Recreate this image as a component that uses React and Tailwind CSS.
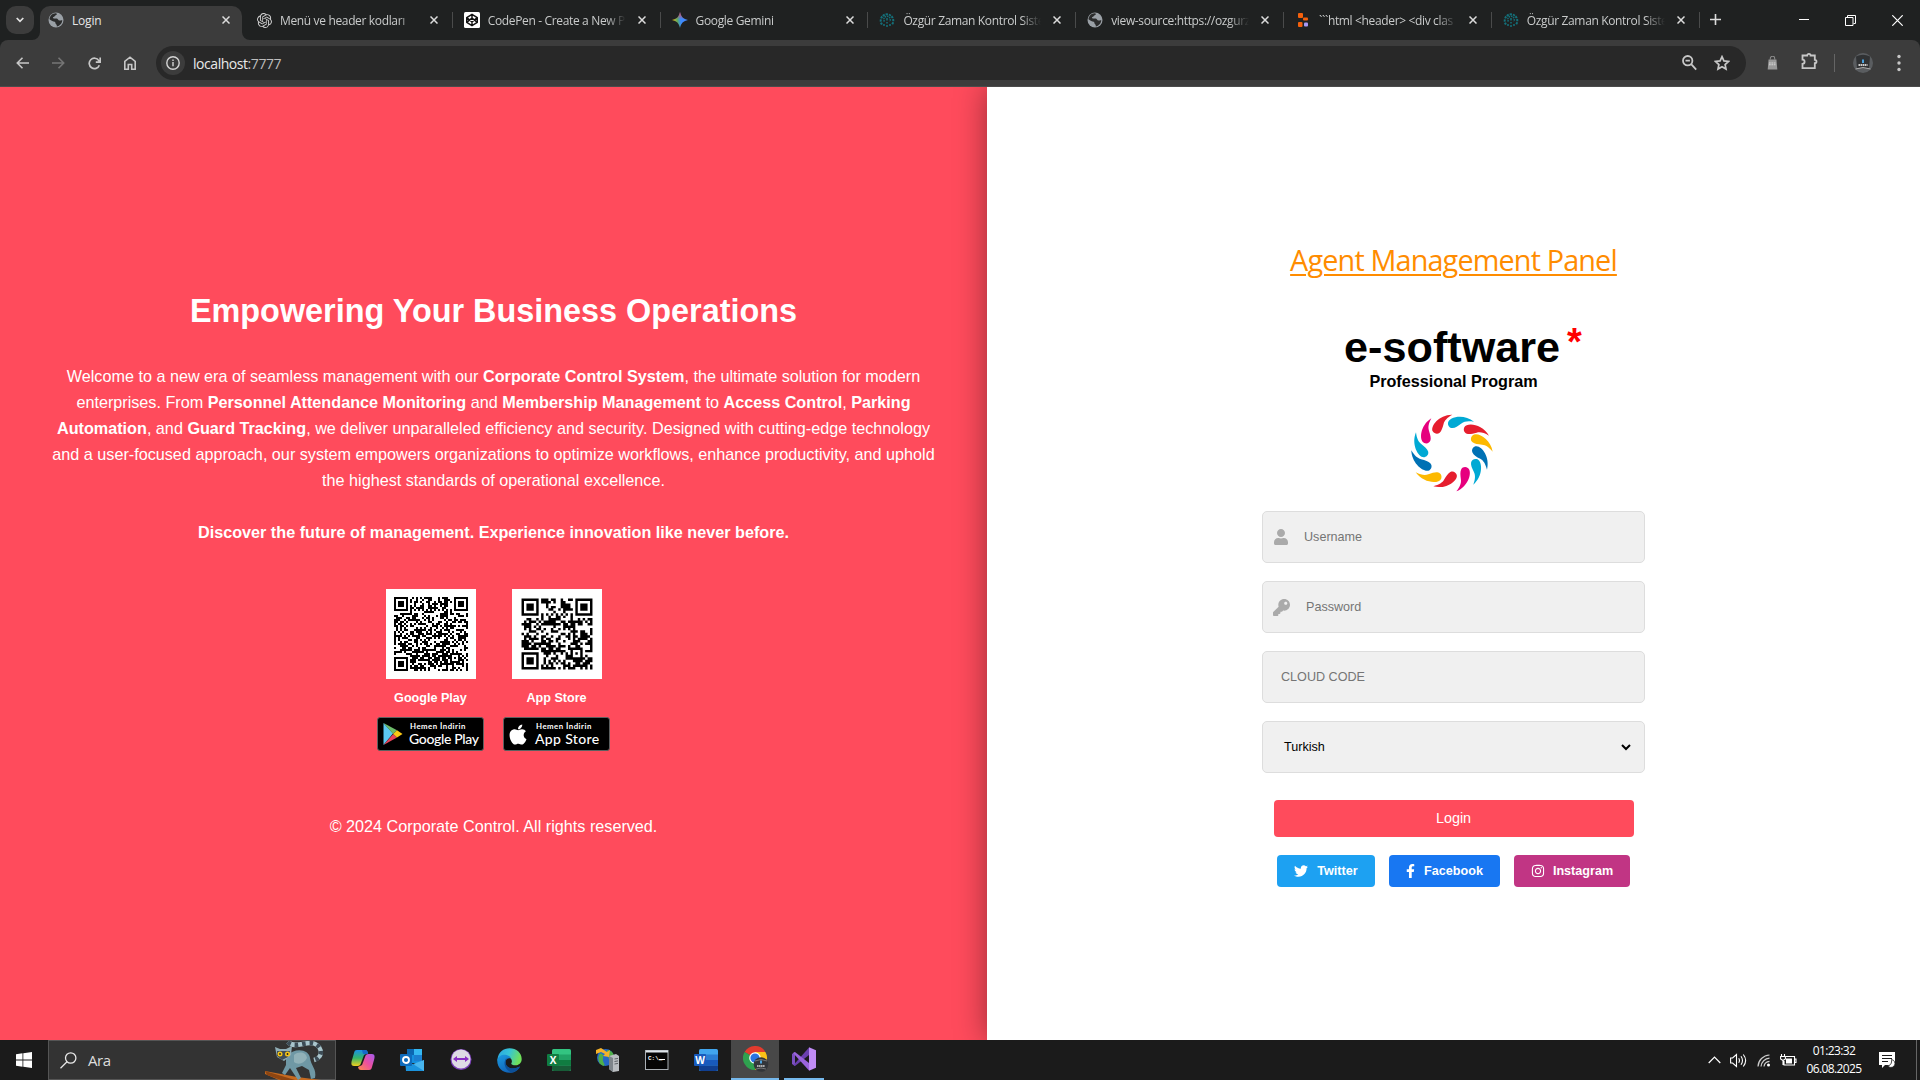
import React from "react";
import { FaUser, FaKey, FaTwitter, FaFacebookF, FaInstagram, FaApple } from "react-icons/fa";
import { SiOpenai } from "react-icons/si";

const Globe = () => (
  <svg className="size-4" viewBox="0 0 16 16">
    <circle cx="8" cy="8" r="7.5" fill="#9aa0a6" />
    <path d="M8 1.200c1.500.3 1 1.600-.3 2-1.200.4-1 1.600-2.200 1.900-1 .3-.6 1.500.5 1.500h2.500c1.500 0 1.500 2 3 2 .8 0 1.500-.3 2.800-.3-.2 3-2.500 5.700-5.500 6.300.2-1.500-.2-2-.9-2.600-.7-.6-.2-1.900-1.200-2.200-1.600-.4-3.200-1.300-5.200-2.600C1.700 3.900 4.500 1 8 1.200z" fill="#2b2c2c" />
  </svg>
);

const OpenAI = () => <SiOpenai className="size-[15px] text-[#d0d0d0]" />;

const CodePen = () => (
  <svg className="size-4" viewBox="0 0 16 16">
    <rect width="16" height="16" rx="1.500" fill="#fff" />
    <path d="M8 2.300l5.300 3.300v4.800L8 13.700 2.700 10.400V5.600zM8 2.300v3.800M8 13.700V9.900M2.700 5.600L8 9.900l5.300-4.300M2.700 10.400L8 6.100l5.300 4.300" fill="none" stroke="#111" strokeWidth="1.400" strokeLinejoin="round" />
  </svg>
);

const Gemini = () => (
  <svg className="size-4" viewBox="0 0 16 16">
    <defs>
      <linearGradient id="gem" x1="0" y1="0.600" x2="1" y2="0.500">
        <stop offset="0" stopColor="#fbbc04" />
        <stop offset=".35" stopColor="#59a96a" />
        <stop offset=".55" stopColor="#3b8bff" />
        <stop offset="1" stopColor="#4a86f7" />
      </linearGradient>
      <linearGradient id="gem2" x1="0" y1="0" x2="0" y2="1">
        <stop offset="0" stopColor="#f44336" />
        <stop offset=".45" stopColor="#f44336" stopOpacity="0" />
      </linearGradient>
    </defs>
    <path d="M8 0c.8 4.500 3.500 7.200 8 8-4.500.8-7.200 3.500-8 8-.8-4.500-3.500-7.200-8-8 4.500-.8 7.200-3.500 8-8z" fill="url(#gem)" />
    <path d="M8 0c.8 4.500 3.500 7.200 8 8-4.500.8-7.200 3.500-8 8-.8-4.500-3.500-7.200-8-8 4.500-.8 7.200-3.500 8-8z" fill="url(#gem2)" />
  </svg>
);

const Ozgur = () => (
  <svg className="size-4" viewBox="0 0 16 16" fill="none" stroke="#14707a">
    <path d="M3 12.500A6.300 6.300 0 1 1 13 12.500" strokeWidth="2" strokeDasharray="2.200 .9" />
    <path d="M5.500 9.500a3.200 3.200 0 1 1 5 0" strokeWidth="1.500" strokeDasharray="1.500 .8" />
    <path d="M8 6v2.500M8 10v1.500M8 13v2M5 12v2M11 12v2" strokeWidth="1.500" />
  </svg>
);

const Blocks = () => (
  <svg className="size-4" viewBox="0 0 16 16">
    <rect x="3" y="1" width="5" height="5" rx="1" fill="#f4600c" />
    <rect x="8" y="5.500" width="5" height="3" rx="1" fill="#f4600c" />
    <rect x="3" y="10" width="4.500" height="5" rx="1" fill="#f4600c" />
    <rect x="9" y="10.500" width="4" height="4" rx="1" fill="#a99af5" />
  </svg>
);

const tabs = [
  { icon: <OpenAI />, title: "Menü ve header kodları" },
  { icon: <CodePen />, title: "CodePen - Create a New P" },
  { icon: <Gemini />, title: "Google Gemini" },
  { icon: <Ozgur />, title: "Özgür Zaman Kontrol Siste" },
  { icon: <Globe />, title: "view-source:https://ozgurz" },
  { icon: <Blocks />, title: "```html <header> <div clas" },
  { icon: <Ozgur />, title: "Özgür Zaman Kontrol Siste" },
];

const X = () => (
  <svg className="size-2 shrink-0" viewBox="0 0 8 8" stroke="#dcdcdc" strokeWidth="1.500">
    <path d="M.5.5l7 7M7.500.5l-7 7" />
  </svg>
);

function Tab({ icon, title }) {
  return (
    <div className="flex h-7 w-[207.800px] shrink-0 items-center pl-[14px]">
      <div className="flex w-4 justify-center">{icon}</div>
      <div className="mt-px ml-2 w-[143px] whitespace-nowrap text-[12px] tracking-[-0.350px] text-[#c9cbcb] [mask-image:linear-gradient(to_right,black_118px,transparent_138px)]">{title}</div>
      <div className="ml-[7px]"><X /></div>
      <div className="mr-[-3px] ml-auto h-4 w-px bg-[#4a4b4b]" />
    </div>
  );
}

function TabStrip() {
  return (
    <div className="flex h-10 items-end bg-[#1f2121]">
      <div className="mb-1.5 ml-1.5 flex h-7 w-7 items-center justify-center rounded-[10px] bg-[#3c3c3c]">
        <svg width="8" height="6" viewBox="0 0 8 6" fill="none" stroke="#e3e3e3" strokeWidth="1.700"><path d="M.7 1L4 4.300 7.300 1" /></svg>
      </div>
      <svg className="ml-[-2px]" width="8" height="8" viewBox="0 0 8 8"><path d="M8 0v8H0a8 8 0 0 0 8-8z" fill="#3c3c3c" /></svg>
      <div className="flex h-[34px] w-[202px] items-center rounded-t-[10px] bg-[#3c3c3c] pb-1.5 pl-2">
        <Globe />
        <div className="mt-px ml-2 w-[150px] text-[12px] tracking-[-0.200px] text-[#e6e6e6]">Login</div>
        <X />
      </div>
      <svg width="8" height="8" viewBox="0 0 8 8"><path d="M0 0v8h8a8 8 0 0 1-8-8z" fill="#3c3c3c" /></svg>
      <div className="mb-1.5 ml-[-8px] flex">
        {tabs.map((t, i) => <Tab key={i} {...t} />)}
      </div>
      <svg className="mb-[15px] ml-[13px]" width="11" height="11" viewBox="0 0 11 11" stroke="#dcdcdc" strokeWidth="1.600"><path d="M5.500 0v11M0 5.500h11" /></svg>
      <div className="mb-[14px] ml-auto mr-[17px] flex items-center gap-[36px]">
        <svg width="10" height="12" viewBox="0 0 10 12" stroke="#fff"><path d="M0 5.500h10" /></svg>
        <svg width="11" height="11" viewBox="0 0 11 11" fill="none" stroke="#fff"><path d="M.5 2.500h7.500v8h-7.500zM2.500 2.500v-2h8v8h-2" /></svg>
        <svg width="11" height="11" viewBox="0 0 11 11" stroke="#fff" strokeWidth="1.200"><path d="M.3.3l10.400 10.400M10.700.3L.3 10.700" /></svg>
      </div>
    </div>
  );
}

function Toolbar() {
  return (
    <div className="flex h-[47px] items-center rounded-t-[8px] border-b border-[#4b4b4b] bg-[#3c3c3c] pl-4 text-[#c7c7c7]">
      <div className="flex w-[140px] items-center gap-[23px]">
        <svg width="13" height="12" viewBox="0 0 13 12" fill="none" stroke="#c7c7c7" strokeWidth="1.600"><path d="M13 6H1.500M6.500.8L1.300 6l5.200 5.200" /></svg>
        <svg width="13" height="12" viewBox="0 0 13 12" fill="none" stroke="#757575" strokeWidth="1.600"><path d="M0 6h11.500M6.500.8L11.700 6l-5.200 5.200" /></svg>
        <svg width="13" height="13" viewBox="0 0 13 13" fill="none" stroke="#c7c7c7" strokeWidth="1.700"><path d="M11.300 8.200A5.200 5.200 0 1 1 10.800 3.600L12 5M12.200.5v4.600H7.800" /></svg>
        <svg width="12" height="14" viewBox="0 0 12 14" fill="none" stroke="#c7c7c7" strokeWidth="1.600"><path d="M.8 13.200V5.300L6 1.200l5.200 4.100v7.900H7.700V8.500H4.300v4.700z" /></svg>
      </div>
      <div className="flex h-[34px] w-[1590px] items-center rounded-full bg-[#282828] pl-[5px]">
        <div className="flex size-6 items-center justify-center rounded-full bg-[#3c3c3c]">
          <svg width="14" height="14" viewBox="0 0 14 14" fill="none" stroke="#d5d5d5" strokeWidth="1.400"><circle cx="7" cy="7" r="6.200" /><path d="M7 6v4.200M7 3.600v1.500" /></svg>
        </div>
        <div className="ml-2 text-[14px] tracking-[-0.450px] text-[#e8e8e8]">localhost<span className="text-[#bdbdbd]">:7777</span></div>
        <svg className="ml-auto" width="15" height="16" viewBox="0 0 15 16" fill="none" stroke="#c7c7c7" strokeWidth="1.800"><circle cx="5.700" cy="5.700" r="4.700" /><path d="M9.200 9.200l5 5.500M3.500 5.700h4.400" /></svg>
        <svg className="mr-4 ml-[17px]" width="16" height="16" viewBox="0 0 16 16" fill="none" stroke="#c7c7c7" strokeWidth="1.700"><path d="M8 1.700l1.900 4.200 4.600.5-3.400 3.100.9 4.500-4-2.300L4 14l.9-4.500L1.500 6.400l4.600-.5z" /></svg>
      </div>
      <svg className="ml-[21px]" width="11" height="14" viewBox="0 0 11 16"><path d="M3 4V2.500a2.500 2.200 0 0 1 5 0V4" fill="none" stroke="#8c8c8c" strokeWidth="1.200" /><path d="M1 4h9l1 11.500H0z" fill="#999" /><path d="M1.500 8h8M1.500 10h8" stroke="#d6d6d6" strokeWidth="1.200" strokeDasharray="2 .7" /></svg>
      <svg className="mb-1 ml-[23px]" width="17" height="18" viewBox="0 0 17 18" fill="none" stroke="#c7c7c7" strokeWidth="1.800"><path d="M1.500 3.500h4.700a1.700 1.700 0 0 1 3.400 0h4.200v4.300a1.700 1.700 0 0 1 0 3.400v4.900H1.500v-4.300c2.800-.2 2.800-4 0-4.200z" /></svg>
      <div className="ml-4 h-[18px] w-px bg-[#656565]" />
      <svg className="ml-[18px]" width="20" height="20" viewBox="0 0 20 20">
        <circle cx="10" cy="10" r="10" fill="#5a5d60" />
        <path d="M3 3.500Q10 0 17 3.500L16 15H4z" fill="#303234" />
        <path d="M2.500 16Q10 13 17.500 16" stroke="#aaa" fill="none" />
        <rect x="9" y="6.500" width="2" height="3.500" fill="#4aa3e0" />
        <path d="M5.500 12h9" stroke="#ccc" strokeWidth="2" strokeDasharray="1.500 .5" />
      </svg>
      <svg className="ml-6" width="4" height="18" viewBox="0 0 4 18" fill="#c7c7c7"><circle cx="2" cy="2.500" r="1.700" /><circle cx="2" cy="9" r="1.700" /><circle cx="2" cy="15.500" r="1.700" /></svg>
    </div>
  );
}

/* Square matrix code with finder patterns and deterministic data modules. */
function qrPath(n, seed) {
  let s = seed;
  const rnd = () => {
    s = (s * 1664525 + 1013904223) >>> 0;
    return s / 4294967296;
  };
  let d = "";
  const finder = (x, y) => {
    const m = Math.max(Math.abs(x - 3), Math.abs(y - 3));
    return m === 3 || m <= 1;
  };
  for (let y = 0; y < n; y++) {
    for (let x = 0; x < n; x++) {
      const r = rnd() < 0.54;
      let on = r;
      if (x < 8 && y < 8) on = x < 7 && y < 7 && finder(x, y);
      else if (x >= n - 8 && y < 8) on = x >= n - 7 && y < 7 && finder(x - n + 7, y);
      else if (x < 8 && y >= n - 8) on = x < 7 && y >= n - 7 && finder(x, y - n + 7);
      else if (Math.abs(x - n + 7) <= 2 && Math.abs(y - n + 7) <= 2) {
        on = Math.max(Math.abs(x - n + 7), Math.abs(y - n + 7)) !== 1;
      } else if (x === 6 || y === 6) on = (x + y) % 2 === 0;
      if (on) d += `M${x} ${y}h1v1h-1z`;
    }
  }
  return d;
}

function Store({ n, seed, pad, label, children }) {
  return (
    <div className="flex w-[126px] flex-col items-center">
      <svg className="size-[90px] bg-white" viewBox={`${-pad} ${-pad} ${n + 2 * pad} ${n + 2 * pad}`} shapeRendering={n === 37 ? "crispEdges" : "auto"}>
        <path d={qrPath(n, seed)} fill="#000" />
      </svg>
      <div className="mt-[10px] h-[18px] text-[12.600px] leading-[18px] font-bold">{label}</div>
      <div className="mt-2.5 flex h-[34px] w-[107px] items-center rounded-[3px] border border-[#5d6060] bg-black pl-[5px]">{children}</div>
    </div>
  );
}

function LeftPanel() {
  return (
    <div className="flex w-[987px] flex-col items-center bg-[#ff4b5c] pt-[202px] text-[16.200px] leading-[25.920px] text-white">
      <h1 className="text-[32.400px] leading-[44px] font-bold">Empowering Your Business Operations</h1>
      <p className="mt-[31px] w-[900px] text-center">
        Welcome to a new era of seamless management with our <b>Corporate Control System</b>, the ultimate solution for modern<br />
        enterprises. From <b>Personnel Attendance Monitoring</b> and <b>Membership Management</b> to <b>Access Control</b>, <b>Parking</b><br />
        <b>Automation</b>, and <b>Guard Tracking</b>, we deliver unparalleled efficiency and security. Designed with cutting-edge technology<br />
        and a user-focused approach, our system empowers organizations to optimize workflows, enhance productivity, and uphold<br />
        the highest standards of operational excellence.<br /><br />
        <b>Discover the future of management. Experience innovation like never before.</b>
      </p>
      <div className="mt-11 flex">
        <Store n={37} seed={77} pad={4} label="Google Play">
          <svg width="20" height="22" viewBox="0 0 20 22">
            <path d="M.5 0L10 10.500.5 22z" fill="#5bc8f2" />
            <path d="M.5 0L14 7.200 10.200 11z" fill="#6dbb6a" />
            <path d="M.5 22L14 14.500 10.200 11z" fill="#e9435a" />
            <path d="M14 7.200l5.500 3.700L14 14.500 10.200 11z" fill="#fbc814" />
          </svg>
          <div className="ml-[6px] flex flex-col font-[Lato,sans-serif] whitespace-nowrap">
            <span className="ml-px h-[9px] text-[7.800px] leading-[9px] font-bold tracking-[0.500px]">Hemen İndirin</span>
            <span className="h-4 text-[14px] leading-[15px] font-medium tracking-[-0.350px]">Google Play</span>
          </div>
        </Store>
        <Store n={29} seed={4242} pad={3.900} label="App Store">
          <FaApple className="ml-[-1px] h-[23px] w-[20px]" />
          <div className="ml-[7px] flex flex-col font-[Lato,sans-serif] whitespace-nowrap">
            <span className="ml-px h-[9px] text-[7.800px] leading-[9px] font-bold tracking-[0.500px]">Hemen İndirin</span>
            <span className="h-4 text-[14px] leading-[15px] font-medium tracking-[0.350px]">App Store</span>
          </div>
        </Store>
      </div>
      <div className="mt-[63px]">© 2024 Corporate Control. All rights reserved.</div>
    </div>
  );
}

const drops = [
  [640, 612, 705, 608, "#00a9d4"],
  [688, 630, 750, 650, "#e61e2e"],
  [710, 658, 761, 698, "#fdb900"],
  [714, 694, 744, 752, "#0071b4"],
  [711, 733, 703, 797, "#00a9d4"],
  [680, 758, 652, 817, "#e6007e"],
  [641, 772, 583, 802, "#e61e2e"],
  [594, 775, 530, 760, "#fdb900"],
  [563, 743, 517, 694, "#0071b4"],
  [553, 702, 531, 640, "#00a9d4"],
  [560, 660, 577, 598, "#e6007e"],
  [592, 630, 640, 587, "#e61e2e"],
];

const RingLogo = () => (
  <svg width="84" height="80" viewBox="513 582 252 240">
    {drops.map(([hx, hy, tx, ty, c]) => (
      <path
        key={hx + "-" + hy}
        transform={`translate(${hx} ${hy}) rotate(${(Math.atan2(ty - hy, tx - hx) * 180) / Math.PI}) scale(${Math.hypot(tx - hx, ty - hy) / 65} 1)`}
        d="M0 15C-9 15-14 7-13-1C-10-19 36-27 65 0C47-4 36-3 27 3C16 10 8 15 0 15z"
        fill={c}
      />
    ))}
  </svg>
);

const Field = ({ icon, pad, children, dark }) => (
  <div className={"mb-[18px] flex h-[52px] w-[383px] items-center rounded-[5px] border border-[#ddd] bg-[#f0f0f0] text-[12.600px] " + pad + (dark ? " text-black" : " text-[#757575]")}>
    {icon}
    {children}
  </div>
);

function RightPanel() {
  return (
    <div className="flex flex-1 flex-col items-center bg-white pt-[151px] shadow-[0_0_30px_rgba(0,0,0,0.400)] [clip-path:inset(0_0_0_-40px)]">
      <a className="font-['Open_Sans',sans-serif] text-[28.800px] leading-[44px] font-normal tracking-[-0.850px] whitespace-nowrap text-[#ff8c00] underline decoration-2 underline-offset-[3px]">Agent Management Panel</a>
      <div className="mt-10 flex h-[50px] text-[43.200px] leading-[50px] font-bold text-black">
        <span className="ml-[19px]">e-software</span>
        <span className="-mt-[5px] ml-[7px] text-[38px] text-[#f00]">*</span>
      </div>
      <div className="text-[16.200px] leading-[18px] font-bold text-black">Professional Program</div>
      <div className="mt-[23px] mr-[3px] mb-[18px] h-[80px]"><RingLogo /></div>
      <Field pad="pl-[10px]" icon={<FaUser className="mr-[15px] size-4 text-[#aaa]" />}>Username</Field>
      <Field pad="pl-[10px]" icon={<FaKey className="mr-4 size-[17px] text-[#aaa]" />}>Password</Field>
      <Field pad="pl-[18px]">CLOUD CODE</Field>
      <Field pad="pl-[21px] pr-[13px]" dark>
        <span>Turkish</span>
        <svg className="ml-auto" width="10" height="7" viewBox="0 0 10 7" fill="none" stroke="#000" strokeWidth="2"><path d="M1 1l4 4 4-4" /></svg>
      </Field>
      <div className="mt-[9px] flex h-[37px] w-[360px] items-center justify-center rounded-[4px] bg-[#ff4b5c] text-[14.400px] text-white">Login</div>
      <div className="mt-[18px] flex h-8 gap-[14px] text-[12.600px] font-bold text-white">
        <div className="flex w-[98px] items-center justify-center gap-[9px] rounded-[4px] bg-[#1da1f2]"><FaTwitter className="size-[14px]" />Twitter</div>
        <div className="flex w-[111px] items-center justify-center gap-[9px] rounded-[4px] bg-[#1877f2]"><FaFacebookF className="h-[14px] w-[9px]" />Facebook</div>
        <div className="flex w-[116px] items-center justify-center gap-2 rounded-[4px] bg-[#c13584]"><FaInstagram className="size-[14px]" />Instagram</div>
      </div>
    </div>
  );
}

const Lemur = () => (
  <svg width="60" height="39" viewBox="0 0 60 39">
    <path d="M23 1C28 7 38 2 45 2C57 2 60 16 49 19" fill="none" stroke="#a9c5cc" strokeWidth="4.500" />
    <path d="M23 1C28 7 38 2 45 2C57 2 60 16 49 19" fill="none" stroke="#3c4b55" strokeWidth="4.500" strokeDasharray="3.500 4" />
    <path d="M0 30L32 36 56 39H14L0 33z" fill="#c56a20" />
    <path d="M0 30l2 4 14 5h14z" fill="#8d4511" />
    <path d="M21 15C30 6 44 8 45 17C46 25 52 28 50 37L46 38L44 29L37 25L31 27L36 37L33 39L25 27L20 34L17 32L21 24z" fill="#6f98a5" />
    <path d="M29 14c5-4 12-3 13 3-3 6-9 7-13 4z" fill="#91b1b8" />
    <path d="M10 6l5 2h6l6-3-1 9-7 6-7-4z" fill="#90aeb7" />
    <path d="M12 10h13l-2 6-6 3-5-4z" fill="#3e4c55" />
    <circle cx="15" cy="13" r="2.500" fill="#f4c414" /><circle cx="22.500" cy="13" r="2.500" fill="#f4c414" />
    <circle cx="15" cy="13" r=".9" fill="#222" /><circle cx="22.500" cy="13" r=".9" fill="#222" />
  </svg>
);

const Copilot = () => (
  <svg width="24" height="22" viewBox="0 0 24 22">
    <defs>
      <linearGradient id="cpa" x1="0" y1="0" x2="0" y2="1"><stop stopColor="#1a8fe8" /><stop offset=".5" stopColor="#35b56a" /><stop offset="1" stopColor="#f2cf1d" /></linearGradient>
      <linearGradient id="cpb" x1="1" y1="0" x2="0" y2="1"><stop stopColor="#a45cf0" /><stop offset=".5" stopColor="#ec4fa0" /><stop offset="1" stopColor="#ff8a4a" /></linearGradient>
    </defs>
    <path d="M6 1h8c2 0 2.500 1 3 3l-4 2-3 8c-.5 2-1.500 3-3.500 3H3c-3 0-3-3-2-6l2-7C3.500 2 4 1 6 1z" fill="url(#cpa)" />
    <path d="M11 1h3c2 0 2.500 1 3 4h-5z" fill="#1668c8" />
    <path d="M18 21h-8c-2 0-2.500-1-3-3l4-2 3-8c.5-2 1.500-3 3.500-3H21c3 0 3 3 2 6l-2 7c-.5 2-1 3-3 3z" fill="url(#cpb)" />
  </svg>
);

const Office = ({ letter, dark, a, b, c, d }) => (
  <svg width="24" height="22" viewBox="0 0 24 22">
    <rect x="5" y="0" width="19" height="22" rx="1.500" fill={a} />
    <path d="M5 5.500h19v5.500H5z" fill={b} />
    <path d="M5 11h19v5.500H5z" fill={c} />
    <path d="M5 16.500h19V20q0 2-2 2H7q-2 0-2-2z" fill={d} />
    <rect x="0" y="5" width="12" height="12" rx="1" fill={dark} />
    <text x="6" y="14.500" textAnchor="middle" fontSize="10" fontWeight="700" fill="#fff" fontFamily="Open Sans, sans-serif">{letter}</text>
  </svg>
);

const Outlook = () => (
  <svg width="24" height="22" viewBox="0 0 24 22">
    <rect x="7" y="0" width="15" height="14" fill="#1490df" />
    <path d="M7 0h7v6H7z" fill="#0b67b2" /><path d="M14 0h8v6h-8z" fill="#35b8f1" /><path d="M14 6h8v6h-8z" fill="#1b7fd0" />
    <path d="M5 11l10 5 9-5v11H6z" fill="#1b93dd" /><path d="M24 11v11L13 15z" fill="#48b5ee" />
    <rect y="5" width="12" height="12" rx="1" fill="#0f6cbd" />
    <circle cx="6" cy="11" r="3" fill="none" stroke="#fff" strokeWidth="1.900" />
  </svg>
);

const Viewer = () => (
  <svg width="22" height="24" viewBox="0 0 22 24">
    <circle cx="11" cy="11.500" r="10.500" fill="#7b3fb8" /><circle cx="11" cy="11" r="9.500" fill="#dedbe4" />
    <path d="M3 11l4-3v2h8V8l4 3-4 3v-2H7v2z" fill="#8a2fc4" />
  </svg>
);

const Edge = () => (
  <svg width="25" height="25" viewBox="0 0 25 25">
    <defs>
      <linearGradient id="ea" x1="0" y1="0" x2="1" y2=".3"><stop stopColor="#2aa5e0" /><stop offset=".5" stopColor="#36c3d8" /><stop offset="1" stopColor="#6fe05a" /></linearGradient>
      <linearGradient id="eb" x1="0" y1="0" x2=".6" y2="1"><stop stopColor="#1c9be0" /><stop offset="1" stopColor="#0f5fb5" /></linearGradient>
    </defs>
    <path d="M.5 11C1.500 4 6.500.3 12.500.3 19.500.3 24.700 5 24.700 11c0 4-3 6.300-6.300 6.300-3 0-4.600-1-4-2 1.500-3-.5-6.300-4-6.300C6 9 2 9 .5 13z" fill="url(#ea)" />
    <path d="M.3 12.500C1 7.500 6 6 9.500 7c2.500.7 4 2 4.500 3.500-4-1-6 2-5.500 5 .7 4 6 7 14.500 3-2.500 4.500-6 6.300-10.500 6.300C5 24.800 0 19 .3 12.500z" fill="url(#eb)" />
    <path d="M10 9.500c-3 3-3.500 8 0 12 2 2 4.500 3 6.500 2.700 3-1 5-3 6.500-5.700-8 4-14 1-14.300-3.500-.1-2 .3-4 1.300-5.500z" fill="#0c4f97" />
  </svg>
);

const Iis = () => (
  <svg width="24" height="24" viewBox="0 0 24 24">
    <circle cx="9.500" cy="9.500" r="8.500" fill="#2468c8" />
    <path d="M3 7c3-4 5 1 4 4s3 5 1 7c-4-1-7-5-5-11zM11 2c4 0 7 3 7 7l-4 3c-3-2-1-5-3-7z" fill="#4fb04a" />
    <path d="M0 2l5-2 6 4 3-2-1 7-6-1 2-2-4-2-5 2z" fill="#f4b22a" />
    <path d="M13 8l7-2 3 2v15l-6 1-4-3z" fill="#b9bdc0" /><path d="M13 8l4 2v14l-4-3z" fill="#7e858a" />
    <path d="M18.500 11l3.500-.6M18.500 13.500l3.500-.6M18.500 16l3.500-.6" stroke="#5b6064" />
  </svg>
);

const Cmd = () => (
  <svg width="24" height="20" viewBox="0 0 24 20">
    <rect x=".5" y=".5" width="22.500" height="19" fill="#050505" stroke="#aab0b5" />
    <path d="M1 1.500h22" stroke="#dfe5ea" strokeWidth="2" />
    <text x="3" y="10" fontSize="6" fontWeight="700" fill="#fff" fontFamily="Liberation Mono, monospace">C:\_</text>
    <path d="M14 9.500h6" stroke="#fff" />
  </svg>
);

const Chrome = () => (
  <svg width="26" height="26" viewBox="0 0 26 26">
    <path d="M12 12L1.600 6A12 12 0 0 1 22.400 6z" fill="#e33b2e" />
    <path d="M12 12L1.600 6A12 12 0 0 0 12 24z" fill="#2fa14f" />
    <path d="M12 12V24A12 12 0 0 0 22.400 6H12z" fill="#fbc116" />
    <circle cx="12" cy="12" r="5.800" fill="#fff" /><circle cx="12" cy="12" r="4.600" fill="#2b74e2" />
    <circle cx="18" cy="18.500" r="7.300" fill="#33363a" />
    <path d="M12 15q6-3 12 0M13 23q5-2 10 0" stroke="#777" fill="none" />
    <path d="M14 20h8" stroke="#d5d5d5" strokeWidth="1.500" strokeDasharray="1.500 .4" /><path d="M18 14.500v3" stroke="#4aa3e0" strokeWidth="2" />
  </svg>
);

const VisualStudio = () => (
  <svg width="24" height="24" viewBox="0 0 24 24">
    <path d="M0 7l3-2v14l-3-2z" fill="#7b4fc0" />
    <path d="M3 19l-1.500-1L17 .5v7.500z" fill="#6a3fae" />
    <path d="M1 6l2-1L17 16v7.500z" fill="#9a63dc" />
    <path d="M17 .3l7 3v17.400l-7 3z" fill="#c08cf5" />
  </svg>
);

const apps = [
  <Copilot />,
  <Outlook />,
  <Viewer />,
  <Edge />,
  <Office letter="X" dark="#107c41" a="#33c481" b="#21a366" c="#107c41" d="#185c37" />,
  <Iis />,
  <Cmd />,
  <Office letter="W" dark="#185abd" a="#41a5ee" b="#2b7cd3" c="#185abd" d="#103f91" />,
];

function Taskbar() {
  return (
    <div className="flex h-10 items-center bg-[#1b1b1b] text-white">
      <div className="flex w-12 justify-center">
        <svg width="16" height="16" viewBox="0 0 16 16" fill="#fff"><path d="M0 2.300L6.500 1.300v6.300H0zM7.300 1.200L16 0v7.600H7.300zM0 8.400h6.500v6.300L0 13.700zM7.300 8.400H16V16l-8.700-1.200z" /></svg>
      </div>
      <div className="flex h-10 w-72 items-center border border-[#555] bg-[#333] pl-[11px]">
        <svg width="17" height="17" viewBox="0 0 17 17" fill="none" stroke="#e8e8e8" strokeWidth="1.300"><circle cx="10.700" cy="6" r="5.200" /><path d="M7 9.700L.5 16.300" /></svg>
        <span className="ml-[11px] text-[15px] tracking-[-0.400px] text-[#ddd]">Ara</span>
        <div className="mr-[10px] ml-auto"><Lemur /></div>
      </div>
      <div className="ml-[2px] mr-px flex">
        {apps.map((a, i) => <div key={i} className="flex h-10 w-[49px] items-center justify-center">{a}</div>)}
      </div>
      <div className="flex h-10 w-12 items-center justify-center border-b-2 border-[#76b9ed] bg-[#484848]"><div className="ml-[2px]"><Chrome /></div></div>
      <div className="ml-[5px] flex h-10 w-10 items-center justify-center border-b-2 border-[#76b9ed]"><VisualStudio /></div>
      <div className="ml-auto flex h-10 items-center">
        <svg width="13" height="8" viewBox="0 0 13 8" fill="none" stroke="#fff" strokeWidth="1.200"><path d="M.7 7L6.500 1.200 12.300 7" /></svg>
        <svg className="ml-[9px]" width="17" height="15" viewBox="0 0 17 15" fill="none" stroke="#fff" strokeWidth="1.100"><path d="M.6 5h2L6.500 1.500v12L2.600 10h-2zM8.700 5.200q1.500 2.300 0 4.600M11 3.300q3 4.200 0 8.400M13.300 1.500q4.700 6 0 12" /></svg>
        <svg className="ml-[10px]" width="14" height="13" viewBox="0 0 14 13" fill="none" stroke="#ccc" strokeWidth="1.200"><path d="M1 12.500A12 12 0 0 1 12.500 1M4 12.500A9 9 0 0 1 12.500 4.200M7 12.500a6 6 0 0 1 5.500-5.200" /><circle cx="11.500" cy="11" r="1.500" fill="#fff" stroke="none" /></svg>
        <svg className="ml-[9px]" width="17" height="13" viewBox="0 0 17 13" fill="none" stroke="#fff" strokeWidth="1.100"><path d="M6 2.500h8.500v8.500H4V7M14.500 5h1.500v3.500h-1.500M1.500 0v2.500M4.500 0v2.500M.6 2.500h4.800v2.500L3 6.500.6 5zM3 6.500V11" /><rect x="6" y="4.500" width="6" height="5" fill="#fff" stroke="none" /></svg>
        <div className="ml-2 w-[58px] text-center text-[12px] leading-[18px] tracking-[-0.600px] whitespace-nowrap">01:23:32<br />06.08.2025</div>
        <svg className="ml-4" width="17" height="17" viewBox="0 0 17 17"><path d="M0 0h16v13H6l-3 3v-3H0z" fill="#fff" /><path d="M3 3.500h10M3 6.500h10M3 9.500h6" stroke="#1b1b1b" /><path d="M12.500 7.500a4 4 0 1 1-4 6c3 .5 4.500-2.500 4-6z" fill="#fff" stroke="#1b1b1b" strokeWidth=".8" /></svg>
        <div className="mr-[3px] ml-5 h-10 w-px bg-[#666]" />
      </div>
    </div>
  );
}

export default function App() {
  return (
    <div className="flex h-[1080px] w-[1920px] flex-col overflow-hidden bg-[#1f2121] font-['Open_Sans','Noto_Sans',sans-serif]">
      <TabStrip />
      <Toolbar />
      <main className="flex flex-1 overflow-hidden font-['Liberation_Sans',Arial,sans-serif]">
        <LeftPanel />
        <RightPanel />
      </main>
      <Taskbar />
    </div>
  );
}
